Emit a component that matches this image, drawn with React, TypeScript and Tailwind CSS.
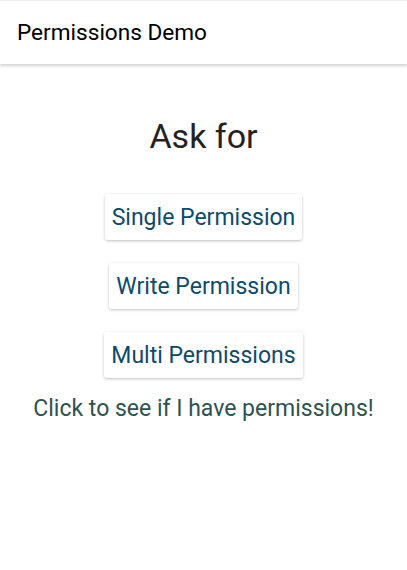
import React from "react";

export default function App() {
  const btn =
    "bg-white rounded-[3px] px-[7px] h-[46px] text-[23px] text-[#0e4b69] shadow-[0_1px_3px_rgba(0,0,0,0.25)] leading-none flex items-center";
  return (
    <div
      className="w-[407px] h-[570px] bg-white flex flex-col"
      style={{ fontFamily: "Roboto, sans-serif" }}
    >
      <div className="h-[64px] shrink-0 pl-[17px] pt-[21px] shadow-[0_2px_3px_rgba(0,0,0,0.18)] border-t border-[#eeeeee]">
        <div className="text-[22.6px] leading-none text-black">Permissions Demo</div>
      </div>
      <div className="flex flex-col items-center">
        <div className="mt-[55px] text-[34px] leading-none text-[#222222]">Ask for</div>
        <button className={`${btn} mt-[41px]`}>Single Permission</button>
        <button className={`${btn} mt-[23px]`}>Write Permission</button>
        <button className={`${btn} mt-[23px]`}>Multi Permissions</button>
        <div className="mt-[19px] text-[23px] leading-none text-[#2d5350]">
          Click to see if I have permissions!
        </div>
      </div>
    </div>
  );
}
